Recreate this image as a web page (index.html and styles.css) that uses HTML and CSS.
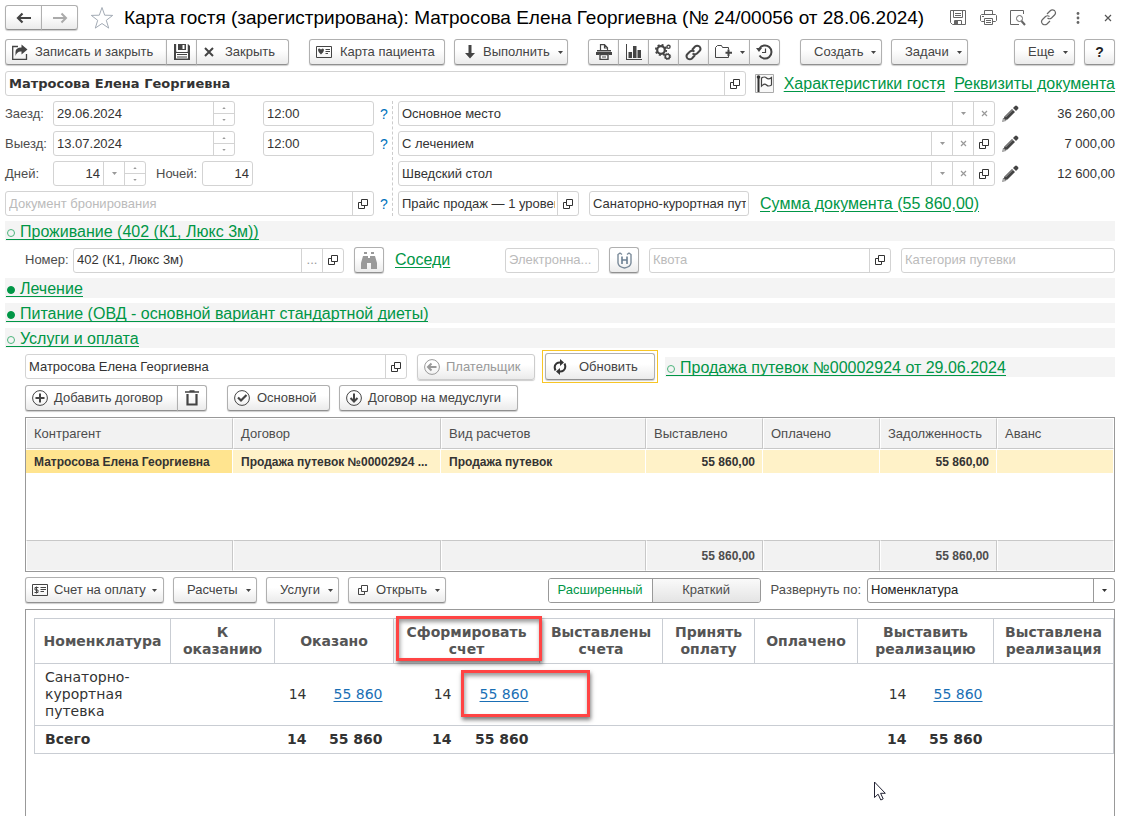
FILE: index.html
```html
<!DOCTYPE html>
<html lang="ru">
<head>
<meta charset="utf-8">
<title>Карта гостя</title>
<link rel="stylesheet" href="styles.css">
</head>
<body>
<svg class="sprite" aria-hidden="true">
  <symbol id="open" viewBox="0 0 10 10"><path d="M3.500 .5h6v6h-6zM3.500 3.500h-3v6h6v-3" fill="none" stroke="currentColor"/></symbol>
  <symbol id="down" viewBox="0 0 5 3"><path d="M0 0h5L2.500 3z" fill="currentColor"/></symbol>
  <symbol id="up" viewBox="0 0 5 3"><path d="M0 3h5L2.500 0z" fill="currentColor"/></symbol>
  <symbol id="clear" viewBox="0 0 7 7"><path d="M1 1l5 5M6 1L1 6" fill="none" stroke="currentColor" stroke-width="1.200"/></symbol>
  <symbol id="pencil" viewBox="0 0 18 18"><path d="M2 15.500l1.500-4L11 4l3 3-7.500 7.500z" fill="#444"/><path d="M12 3l2-2a1.500 1.500 0 0 1 2 0l1 1a1.500 1.500 0 0 1 0 2l-2 2z" fill="#444"/><path d="M4.500 12l7-7" stroke="#aaa" stroke-width="1"/><path d="M1.500 16.500l1-3.500L5 15.500z" fill="#ccc" stroke="#666" stroke-width=".6"/></symbol>
</svg>

<header class="titlebar">
  <div class="group nav">
    <button class="btn" aria-label="Назад"><svg width="16" height="12" viewBox="0 0 16 12"><path d="M2 6h13" stroke="#444" stroke-width="2"/><path d="M6.500 1.500L2 6l4.500 4.500" fill="none" stroke="#444" stroke-width="2.200"/></svg></button>
    <button class="btn" aria-label="Вперед"><svg width="16" height="12" viewBox="0 0 16 12"><path d="M1 6h13" stroke="#aaa" stroke-width="2"/><path d="M9.500 1.500L14 6l-4.500 4.500" fill="none" stroke="#aaa" stroke-width="2"/></svg></button>
  </div>
  <svg class="star" width="24" height="24" viewBox="0 0 24 24"><path d="M12 1.500l2.700 7.700 8 .2-6.400 4.900 2.400 7.800L12 17.500l-6.700 4.600 2.400-7.800L1.300 9.400l8-.2z" fill="#fff" stroke="#a3abb5"/></svg>
  <h1>Карта гостя (зарегистрирована): Матросова Елена Георгиевна (№ 24/00056 от 28.06.2024)</h1>
  <div class="window-tools">
    <button class="tool" aria-label="Сохранить"><svg width="16" height="16" viewBox="0 0 16 16" fill="none" stroke="#666"><path d="M1 .5h14.500v14H2.500l-2-2V.5zM3.500.5v7h9v-7M5 3.500h6M5 5.500h6M4.500 14.500v-4h7v4"/><path d="M5 11h3v3H5z" fill="#666" stroke="none"/></svg></button>
    <button class="tool" aria-label="Печать"><svg width="17" height="16" viewBox="0 0 17 16" fill="none" stroke="#666"><path d="M4.500 4.500v-4h8v4M4.500 11.500h-3l-1-1v-5l1-1h14l1 1v5l-1 1h-3M4.500 8.500h8v6h-8zM6 10.500h5M6 12.500h5M2 6.500h2"/></svg></button>
    <button class="tool" aria-label="Просмотр"><svg width="16" height="16" viewBox="0 0 16 16" fill="none" stroke="#666"><path d="M13.500 4V.5H.5v14H9"/><circle cx="9.500" cy="8.500" r="3"/><path d="M11.500 11l3.500 4" stroke-width="2"/></svg></button>
    <button class="tool" aria-label="Ссылка"><svg width="17" height="17" viewBox="0 0 17 17" fill="none" stroke="#666" stroke-width="1.200"><path d="M7 5l3-3q2-2 4.500-.5 2 2.500 0 4.500l-3 3q-2 1.500-4 0M10 12l-3 3q-2 1.500-4.500 0-2-2.500 0-4.500l3-3q2-1.500 4 0"/></svg></button>
    <button class="tool" aria-label="Меню"><svg width="4" height="12" viewBox="0 0 4 12" fill="#666"><circle cx="2" cy="1.500" r="1.400"/><circle cx="2" cy="6" r="1.400"/><circle cx="2" cy="10.500" r="1.400"/></svg></button>
    <button class="tool" aria-label="Закрыть"><svg width="8" height="8" viewBox="0 0 8 8"><path d="M1 1l6 6M7 1L1 7" stroke="#555" stroke-width="1.200"/></svg></button>
  </div>
</header>

<div class="toolbar commands">
  <div class="group">
    <button class="btn w-save"><svg width="16" height="16" viewBox="0 0 16 16"><path d="M6 2.500H.700v12.800h13.800V10" fill="none" stroke="#444" stroke-width="1.300"/><path d="M3.500 12V8q0-4.500 6-4.500V.5l6 5-6 5V7.500Q5 7 3.500 12z" fill="#444"/></svg>Записать и закрыть</button>
    <button class="btn w-icon" aria-label="Записать"><svg width="16" height="16" viewBox="0 0 16 16"><path d="M0 0h2.500v8h11V0H14l2 2v14H0z" fill="#444"/><path d="M4 0h8v6H4z" fill="#444"/><path d="M8.500 1h2v4h-2z" fill="#fff"/><path d="M2 9h12v5.500H2z" fill="#fff"/><path d="M3 10.500h10M3 13h10" stroke="#444"/><path d="M2.800 0v7.500M13 0v7.500" stroke="#fff"/></svg></button>
    <button class="btn w-close"><svg width="10" height="10" viewBox="0 0 10 10"><path d="M1 1l8 8M9 1L1 9" stroke="#444" stroke-width="2"/></svg>Закрыть</button>
  </div>
  <button class="btn w-patient push"><svg width="16" height="12" viewBox="0 0 16 12"><path d="M.5.500h15v11H.5z" fill="none" stroke="#444"/><path d="M2 4q0-2 1.500-1.500L5 3.500l1.500-1Q8 2.500 8 4q0 2-3 4.500Q2 6 2 4z" fill="#444"/><path d="M9.500 3.500H14M9.500 5.500H14M9.500 7.500H12" stroke="#444"/></svg>Карта пациента</button>
  <button class="btn w-run"><svg width="10" height="14" viewBox="0 0 10 14"><path d="M3.500 0h3v8H10l-5 5.500L0 8h3.500z" fill="#444"/></svg>Выполнить<svg class="caret"><use href="#down"/></svg></button>
  <div class="group push">
    <button class="btn w-icon" aria-label="Печать"><svg width="16" height="16" viewBox="0 0 16 16"><path d="M4.500 6V.700h4l3 3V6M8.500 1v3h3" fill="none" stroke="#444" stroke-width="1.200"/><path d="M1 6h14v1.500H1zM0 8h16v3h-3.500v-1h-9v1H0z" fill="#444"/><path d="M4 10.500h8v5H4z" fill="#fff" stroke="#444" stroke-width="1.400"/><path d="M6 13h4" stroke="#444"/></svg></button>
    <button class="btn w-icon" aria-label="Отчеты"><svg width="16" height="16" viewBox="0 0 16 16" fill="#444"><path d="M0 0h1v15h15v1H0zM2.500 8H6v6H2.500zM7 2h3.500v12H7zM11.500 6H15v8h-3.500z"/></svg></button>
    <button class="btn w-icon" aria-label="Настройки"><svg width="17" height="16" viewBox="0 0 17 16" fill="none" stroke="#444"><circle cx="6" cy="6" r="3.800" stroke-width="2.200"/><circle cx="6" cy="6" r="5.200" stroke-width="1.800" stroke-dasharray="2 2.080"/><circle cx="13.500" cy="2.800" r="1.600" stroke-width="1.400"/><circle cx="12.500" cy="12.500" r="2.200" stroke-width="1.600"/><circle cx="12.500" cy="12.500" r="3.200" stroke-dasharray="1.200 1.300"/></svg></button>
    <button class="btn w-icon" aria-label="Ссылка"><svg width="17" height="17" viewBox="0 0 17 17" fill="none" stroke="#444" stroke-width="2"><path d="M7 6l3-3.500q2-1.500 4.500 0 2 2.500 0 4.500L12 9.500q-2 1.500-4.500 0M10 11l-3 3.500q-2 1.500-4.500 0-2-2.500 0-4.500L5 7.500q2-1.500 4.500 0"/></svg></button>
    <button class="btn w-folder" aria-label="Папка"><svg width="17" height="14" viewBox="0 0 17 14"><path d="M13.500 4.500v-2h-6l-1-2h-4l-2 2v10h13v-2" fill="none" stroke="#444"/><path d="M13.500 4.500v6.500M10.500 7.700H17" stroke="#444" stroke-width="2"/></svg><svg class="caret"><use href="#down"/></svg></button>
    <button class="btn w-icon" aria-label="История"><svg width="17" height="16" viewBox="0 0 17 16" fill="none" stroke="#444"><path d="M3.500 11.500A6.500 6.500 0 1 0 3.500 4.500" stroke-width="2"/><path d="M0 4h6L3 8z" fill="#444" stroke="none"/><path d="M9.500 4.500v4H6" stroke-width="1.200"/></svg></button>
  </div>
  <button class="btn w-create push">Создать<svg class="caret"><use href="#down"/></svg></button>
  <button class="btn w-tasks">Задачи<svg class="caret"><use href="#down"/></svg></button>
  <button class="btn w-more to-end">Еще<svg class="caret"><use href="#down"/></svg></button>
  <button class="btn w-icon help">?</button>
</div>

<main>
<div class="row guest">
  <div class="field grow"><input class="strong" aria-label="Гость" value="Матросова Елена Георгиевна"><button aria-label="Открыть"><svg class="i10"><use href="#open"/></svg></button></div>
  <svg class="flag" width="19" height="19" viewBox="0 0 19 19"><path d="M.5.500h18v18H.5z" fill="#f8f8f8" stroke="#aaa"/><path d="M3.500 3v15" stroke="#333" stroke-width="2"/><circle cx="3.500" cy="3" r="1.800" fill="#333"/><path d="M6.500 4q3-2 5 0t5-.5v7.500q-3 2-5 0t-5 1z" fill="#fff" stroke="#444" stroke-width="1.200"/></svg>
  <a class="link" href="#">Характеристики гостя</a>
  <a class="link" href="#">Реквизиты документа</a>
</div>

<div class="details">
  <div class="stay">
    <div class="row"><label class="lead" for="in">Заезд:</label><div class="field date"><input id="in" value="29.06.2024"><span class="spin"><button aria-label="Больше"><svg><use href="#up"/></svg></button><button aria-label="Меньше"><svg><use href="#down"/></svg></button></span></div><div class="field time"><input aria-label="Время заезда" value="12:00"></div><a class="hint" href="#">?</a></div>
    <div class="row"><label class="lead" for="out">Выезд:</label><div class="field date"><input id="out" value="13.07.2024"><span class="spin"><button aria-label="Больше"><svg><use href="#up"/></svg></button><button aria-label="Меньше"><svg><use href="#down"/></svg></button></span></div><div class="field time"><input aria-label="Время выезда" value="12:00"></div><a class="hint" href="#">?</a></div>
    <div class="row"><label class="lead" for="days">Дней:</label><div class="field days"><input id="days" class="num" value="14"><button aria-label="Выбрать"><svg class="caret dim"><use href="#down"/></svg></button><span class="spin"><button aria-label="Больше"><svg><use href="#up"/></svg></button><button aria-label="Меньше"><svg><use href="#down"/></svg></button></span></div><label class="nights-label" for="nights">Ночей:</label><div class="field nights"><input id="nights" class="num" value="14"></div></div>
    <div class="row"><div class="field grow"><input aria-label="Документ бронирования" placeholder="Документ бронирования"><button aria-label="Открыть"><svg class="i10"><use href="#open"/></svg></button></div><a class="hint" href="#">?</a></div>
  </div>
  <div class="services">
    <div class="row"><div class="field grow"><input aria-label="Размещение" value="Основное место"><button aria-label="Выбрать"><svg class="caret dim"><use href="#down"/></svg></button><button aria-label="Очистить"><svg class="i7 dim"><use href="#clear"/></svg></button></div><button class="edit" aria-label="Изменить"><svg width="18" height="18"><use href="#pencil"/></svg></button><output>36 260,00</output></div>
    <div class="row"><div class="field grow"><input aria-label="Лечение" value="С лечением"><button aria-label="Выбрать"><svg class="caret dim"><use href="#down"/></svg></button><button aria-label="Очистить"><svg class="i7 dim"><use href="#clear"/></svg></button><button aria-label="Открыть"><svg class="i10"><use href="#open"/></svg></button></div><button class="edit" aria-label="Изменить"><svg width="18" height="18"><use href="#pencil"/></svg></button><output>7 000,00</output></div>
    <div class="row"><div class="field grow"><input aria-label="Питание" value="Шведский стол"><button aria-label="Выбрать"><svg class="caret dim"><use href="#down"/></svg></button><button aria-label="Очистить"><svg class="i7 dim"><use href="#clear"/></svg></button><button aria-label="Открыть"><svg class="i10"><use href="#open"/></svg></button></div><button class="edit" aria-label="Изменить"><svg width="18" height="18"><use href="#pencil"/></svg></button><output>12 600,00</output></div>
    <div class="row"><div class="field price"><input aria-label="Прайс" value="Прайс продаж — 1 уровень"><button aria-label="Открыть"><svg class="i10"><use href="#open"/></svg></button></div><div class="field voucher"><input aria-label="Путевка" value="Санаторно-курортная путевка"></div><a class="link" href="#">Сумма документа (55 860,00)</a></div>
  </div>
</div>

<div class="section"><a class="link" href="#"><i class="dot"></i>Проживание (402 (К1, Люкс 3м))</a></div>
<div class="row room">
  <label for="room">Номер:</label>
  <div class="field room-no"><input id="room" value="402 (К1, Люкс 3м)"><button class="dim" aria-label="Выбрать">...</button><button aria-label="Открыть"><svg class="i10"><use href="#open"/></svg></button></div>
  <button class="btn w-icon" aria-label="Поиск"><svg width="16" height="17" viewBox="0 0 16 17" fill="#999"><path d="M3 0h3v2H3zM10 0h3v2h-3zM2 4h5v2h2V4h5l2 7v6H10v-6H6v6H0v-6z"/></svg></button>
  <a class="link" href="#">Соседи</a>
  <div class="field email"><input aria-label="Электронная почта" placeholder="Электронна..."></div>
  <button class="btn w-icon" aria-label="Мед"><svg width="15" height="17" viewBox="0 0 15 17" fill="none" stroke="#7b8b9a"><path d="M5 2.500L3 1 1 2.500V11q.5 4 6.500 5Q13.500 15 14 11V2.500L12 1l-2 1.500" stroke-width="1.400"/><path d="M5 4.500v7.500M10 4.500v7.500M5 8h5" stroke="#6b7f92" stroke-width="1.600"/></svg></button>
  <div class="field quota"><input aria-label="Квота" placeholder="Квота"><button aria-label="Открыть"><svg class="i10"><use href="#open"/></svg></button></div>
  <div class="field grow"><input aria-label="Категория путевки" placeholder="Категория путевки"></div>
</div>
<div class="section"><a class="link" href="#"><i class="dot full"></i>Лечение</a></div>
<div class="section"><a class="link" href="#"><i class="dot full"></i>Питание (ОВД - основной вариант стандартной диеты)</a></div>
<div class="section"><a class="link" href="#"><i class="dot"></i>Услуги и оплата</a></div>

<div class="payment">
  <div class="row payer-row">
    <div class="field payer"><input aria-label="Плательщик" value="Матросова Елена Георгиевна"><button aria-label="Открыть"><svg class="i10"><use href="#open"/></svg></button></div>
    <button class="btn w-payer" disabled><svg width="16" height="16" viewBox="0 0 16 16" fill="none" stroke="#999"><circle cx="8" cy="8" r="7.400"/><path d="M4 8h8.500M7.500 4.500L4 8l3.500 3.500" stroke-width="2"/></svg>Плательщик</button>
    <div class="focus"><button class="btn w-refresh"><svg width="14" height="16" viewBox="0 0 14 16"><path d="M2.500 11.500Q.5 7 3.500 4.500 5 3.300 7.500 3.500M11.500 4.500q2 4.500-1 7-1.500 1.200-4 1" fill="none" stroke="#333" stroke-width="2"/><path d="M7 0l4 3.500L7 7zM7 9l-4 3.500L7 16z" fill="#333"/></svg>Обновить</button></div>
    <div class="section sale"><a class="link" href="#"><i class="dot"></i>Продажа путевок №00002924 от 29.06.2024</a></div>
  </div>
  <div class="toolbar contracts">
    <div class="group">
      <button class="btn w-add"><svg width="16" height="16" viewBox="0 0 16 16" fill="none" stroke="#444"><circle cx="8" cy="8" r="7.400"/><path d="M8 3.500v9M3.500 8h9" stroke-width="2"/></svg>Добавить договор</button>
      <button class="btn w-icon" aria-label="Удалить"><svg width="14" height="16" viewBox="0 0 14 16" fill="none" stroke="#444"><path d="M0 2h14M4.500 1h5" stroke-width="1.600"/><path d="M2.500 4v10.500h9V4" stroke-width="2.200"/></svg></button>
    </div>
    <button class="btn w-main push"><svg width="16" height="16" viewBox="0 0 16 16" fill="none" stroke="#444"><circle cx="8" cy="8" r="7.400"/><path d="M4 7.500L7 10.500 12.500 5" stroke-width="2.200"/></svg>Основной</button>
    <button class="btn w-med"><svg width="16" height="16" viewBox="0 0 16 16" fill="none" stroke="#444"><circle cx="8" cy="8" r="7.400"/><path d="M8 3.500v8M4.500 8L8 11.500 11.500 8" stroke-width="2"/></svg>Договор на медуслуги</button>
  </div>

  <table class="contracts-table">
    <colgroup><col style="width:207px"><col style="width:208px"><col style="width:205px"><col style="width:117px"><col style="width:117px"><col style="width:117px"><col></colgroup>
    <thead><tr><th>Контрагент</th><th>Договор</th><th>Вид расчетов</th><th>Выставлено</th><th>Оплачено</th><th>Задолженность</th><th>Аванс</th></tr></thead>
    <tbody>
      <tr class="selected"><td>Матросова Елена Георгиевна</td><td>Продажа путевок №00002924 ...</td><td>Продажа путевок</td><td class="sum">55 860,00</td><td></td><td class="sum">55 860,00</td><td></td></tr>
      <tr class="blank"><td colspan="7"></td></tr>
    </tbody>
    <tfoot><tr><td></td><td></td><td></td><td class="sum">55 860,00</td><td></td><td class="sum">55 860,00</td><td></td></tr></tfoot>
  </table>

  <div class="toolbar report-bar">
    <button class="btn w-bill"><svg width="16" height="12" viewBox="0 0 16 12" fill="none" stroke="#444"><path d="M.5.500h15v11H.5zM8.500 3.500H14M8.500 5.500H14M8.500 7.500H12"/><path d="M6.500 3.500H3V6h3v2.500H2.500M4.500 2.500v7"/></svg>Счет на оплату<svg class="caret"><use href="#down"/></svg></button>
    <button class="btn w-calc">Расчеты<svg class="caret"><use href="#down"/></svg></button>
    <button class="btn w-serv">Услуги<svg class="caret"><use href="#down"/></svg></button>
    <button class="btn w-open"><svg class="i10"><use href="#open"/></svg>Открыть<svg class="caret"><use href="#down"/></svg></button>
    <div class="toggle to-end"><button class="active">Расширенный</button><button>Краткий</button></div>
    <label for="by">Развернуть по:</label>
    <div class="select"><select id="by"><option>Номенклатура</option></select><span><svg class="caret"><use href="#down"/></svg></span></div>
  </div>

  <div class="report">
    <table>
      <colgroup><col style="width:136px"><col style="width:104px"><col style="width:43px"><col style="width:76px"><col style="width:69px"><col style="width:77px"><col style="width:123px"><col style="width:92px"><col style="width:103px"><col style="width:60px"><col style="width:76px"><col style="width:120px"></colgroup>
      <thead><tr><th>Номенклатура</th><th>К оказанию</th><th colspan="2">Оказано</th><th colspan="2" class="marked">Сформировать счет<span class="mark mark-head"></span></th><th>Выставлены счета</th><th>Принять оплату</th><th>Оплачено</th><th colspan="2">Выставить реализацию</th><th>Выставлена реализация</th></tr></thead>
      <tbody><tr><td>Санаторно-курортная путевка</td><td></td><td class="sum">14</td><td class="sum"><a href="#">55 860</a></td><td class="sum">14</td><td class="sum marked"><a href="#">55 860</a><span class="mark mark-cell"></span></td><td></td><td></td><td></td><td class="sum">14</td><td class="sum"><a href="#">55 860</a></td><td></td></tr></tbody>
      <tfoot><tr><td>Всего</td><td></td><td class="sum">14</td><td class="sum">55 860</td><td class="sum">14</td><td class="sum">55 860</td><td></td><td></td><td></td><td class="sum">14</td><td class="sum">55 860</td><td></td></tr></tfoot>
    </table>
  </div>
</div>
</main>
<svg class="pointer" width="13" height="20" viewBox="0 0 13 20"><path d="M1.500 1v15.500l3.600-3.300 2.700 5.800 2.400-1.100-2.600-5.600h4.700z" fill="#fff" stroke="#223"/></svg>
</body>
</html>
```
FILE: styles.css
```css
* { box-sizing: border-box; }
html { background: #fff; }
body {
  margin: 0;
  padding: 5px 12px 0 5px;
  min-height: 100vh;
  display: flex;
  flex-direction: column;
  position: relative;
  font: 13px/16px "Liberation Sans", Arial, sans-serif;
  color: #333;
}
button, input, select { font: inherit; color: inherit; }
button { padding: 0; margin: 0; border: 0; background: none; }
svg { flex: none; display: block; }
.sprite { position: absolute; width: 0; height: 0; }
.i10 { width: 10px; height: 10px; }
.i7 { width: 7px; height: 7px; }
.caret { width: 5px; height: 3px; }
.dim { color: #999; }
.grow { flex: 1; min-width: 0; }

/* Title bar */
.titlebar { display: flex; align-items: center; height: 25px; }
.titlebar h1 { margin: 0 0 0 10px; font-size: 19px; line-height: 24px; font-weight: normal; color: #000; white-space: nowrap; }
.nav .btn { width: 37px; height: 25px; }
.star { margin-left: 12px; }
.window-tools { margin-left: auto; margin-right: -8px; display: flex; }
.tool { width: 30px; height: 24px; display: flex; align-items: center; justify-content: center; }

/* Buttons */
.btn {
  display: flex;
  align-items: center;
  gap: 8px;
  height: 26px;
  padding: 0 6px;
  border: 1px solid #b0b0b0;
  border-bottom-color: #909090;
  border-radius: 3px;
  background: linear-gradient(#fff 40%, #ebebeb);
  box-shadow: 0 1px 1px #ccc;
  color: #444;
  white-space: nowrap;
}
.btn:disabled { color: #999; border-color: #ccc; }
.btn .caret { margin-left: auto; }
.group { display: flex; }
.group .btn + .btn { margin-left: -1px; border-top-left-radius: 0; border-bottom-left-radius: 0; }
.group .btn:not(:last-child) { border-top-right-radius: 0; border-bottom-right-radius: 0; }
.nav .btn, .w-icon { justify-content: center; padding: 0; }
.w-icon { width: 30px; }
.commands .w-icon { width: 31px; }
.toolbar { display: flex; align-items: center; gap: 9px; }
.commands { margin-top: 9px; }
.push { margin-left: 11px; }
.to-end { margin-left: auto; }
.w-save { width: 162px; gap: 7px; }
.w-close { width: 93px; gap: 11px; padding-left: 7px; }
.w-patient { width: 136px; }
.w-run { width: 114px; padding-left: 10px; }
.w-folder { width: 42px; }
.w-create { width: 82px; padding-left: 13px; }
.w-tasks { width: 77px; padding-left: 13px; }
.w-more { width: 61px; padding-left: 13px; }
.help { font-weight: bold; font-size: 14px; color: #222; }

/* Fields */
.row { display: flex; align-items: center; height: 25px; }
.field { display: flex; height: 25px; border: 1px solid #d3d3d3; border-radius: 3px; background: #fff; }
.field input { flex: 1; min-width: 0; width: 0; border: 0; padding: 0 2px 0 3px; background: none; outline: 0; }
.field input::placeholder { color: #bbb; opacity: 1; }
.field input.strong { font-family: "DejaVu Sans", Verdana, sans-serif; font-weight: bold; }
.field input.num { text-align: right; padding-right: 3px; }
.field > button { width: 21px; border-left: 1px solid #d3d3d3; display: flex; align-items: center; justify-content: center; }
.spin { width: 21px; border-left: 1px solid #d3d3d3; display: flex; flex-direction: column; color: #999; }
.spin button { flex: 1; display: flex; align-items: center; justify-content: center; }
.spin button + button { border-top: 1px solid #d3d3d3; }
.spin svg { width: 4px; height: 2px; }
label { color: #4d4d4d; white-space: nowrap; }
.link { color: #009646; font-size: 16px; line-height: 18px; white-space: nowrap; text-underline-offset: 2px; }

.guest { margin-top: 6px; }
.flag { margin: 0 10px 0 9px; }
.guest .link + .link { margin-left: 9px; }
.details { display: flex; margin-top: 5px; }
.stay, .services { display: flex; flex-direction: column; gap: 5px; }
.stay { width: 388px; padding-right: 5px; border-right: 1px dashed #ccc; }
.services { flex: 1; min-width: 0; padding-left: 5px; }
.lead { width: 48px; }
.date { width: 182px; }
.time { width: 111px; margin-left: 28px; }
.days { width: 93px; }
.nights-label { width: 56px; padding-left: 10px; }
.nights { width: 51px; }
.hint { width: 8px; margin-left: 6px; margin-right: -1px; color: #0072bc; font-size: 14px; text-decoration: none; }
.edit { margin-left: 6px; }
.services output { width: 96px; text-align: right; }
.price { width: 181px; }
.voucher { width: 160px; margin: 0 11px 0 10px; }

/* Sections */
.section { height: 20px; margin-top: 5px; padding-left: 1px; background: #f4f4f4; line-height: 20px; }
.section .link { display: inline-block; line-height: 17px; margin-top: 2px; border-bottom: 1px solid #009646; height: 17px; text-decoration: none; }
.dot { display: inline-block; width: 8px; height: 8px; margin: 0 5px 0 1px; border: 1px solid #4db57d; border-radius: 50%; }
.dot.full { background: #009646; border-color: #009646; }
.room { height: 26px; margin-top: 6px; padding-left: 20px; }
.room label { width: 48px; }
.room-no { width: 271px; margin-right: 10px; }
.room .link { margin: 0 auto 0 11px; }
.email { width: 94px; margin-right: 10px; }
.quota { width: 242px; margin: 0 10px; }
.room .grow { flex: 0 0 214px; }

/* Payment */
main { flex: 1; display: flex; flex-direction: column; }
.payment { flex: 1; display: flex; flex-direction: column; padding-left: 20px; }
.payer-row { height: 33px; margin-top: 2px; }
.payer { width: 382px; }
.w-payer { width: 118px; margin: 0 7px 0 10px; gap: 6px; }
.focus { padding: 2px; border: 1px solid #f7c526; }
.w-refresh { width: 110px; height: 27px; gap: 12px; padding-left: 7px; }
.sale { flex: 1; margin: 0 0 0 7px; }
.contracts { margin-top: 2px; }
.w-add { width: 153px; gap: 6px; }
.w-main { width: 103px; gap: 7px; }
.w-med { width: 179px; gap: 6px; }

.contracts-table { width: 100%; margin-top: 6px; table-layout: fixed; border-collapse: separate; border-spacing: 0; border: 1px solid #999; }
.contracts-table th, .contracts-table td { padding: 0 7px; overflow: hidden; white-space: nowrap; border: 1px solid #fff; text-align: left; }
.contracts-table th { height: 31px; background: #f2f2f2; color: #4d4d4d; font-weight: normal; border-right-color: #c8c8c8; border-bottom-color: #c8c8c8; }
.contracts-table th:last-child, .contracts-table tfoot td:last-child { border-right-color: #fff; }
.contracts-table .selected td { height: 25px; background: #fff2c8; font-size: 12px; font-weight: bold; border-left: 0; padding-left: 8px; }
.contracts-table .selected td:first-child { background: #ffe48f; }
.contracts-table .blank td { height: 66px; }
.contracts-table tfoot td { height: 31px; background: #f2f2f2; color: #4d4d4d; font-size: 12px; font-weight: bold; border-right-color: #c8c8c8; border-top-color: #c8c8c8; }
.contracts-table .sum, .report .sum { text-align: right; }

.report-bar { margin-top: 5px; }
.w-bill { width: 139px; gap: 6px; }
.w-calc { width: 84px; padding-left: 13px; }
.w-serv { width: 73px; padding-left: 13px; }
.w-open { width: 98px; padding: 0 6px 0 9px; }
.toggle { display: flex; height: 25px; border: 1px solid #999; border-radius: 3px; overflow: hidden; }
.toggle button { width: 108px; background: linear-gradient(#fafafa, #e4e4e4); color: #4d4d4d; border-left: 1px solid #999; }
.toggle .active { width: 103px; background: #fff; color: #009646; border: 0; }
.report-bar label { margin-left: 1px; margin-right: -3px; }
.select { display: flex; position: relative; width: 248px; height: 25px; border: 1px solid #999; border-radius: 3px; }
.select select { flex: 1; appearance: none; border: 0; background: none; padding: 0 3px; color: #222; }
.select span { position: absolute; right: 0; top: 0; bottom: 0; width: 21px; border-left: 1px solid #999; display: flex; align-items: center; justify-content: center; pointer-events: none; }

.report { flex: 1; margin-top: 6px; padding: 8px 0 0 8px; border: 1px solid #999; border-bottom: 0; font: 14px/17px "DejaVu Sans", Verdana, sans-serif; }
.report table { width: 100%; table-layout: fixed; border-collapse: collapse; border: 1px solid #c9cdd3; }
.report th { height: 45px; padding: 0 8px; border: 1px solid #c9cdd3; color: #555; }
.report td { padding: 5px 10px; height: 28px; }
.report .sum { padding: 5px 11px 5px 0; }
.report tbody td { height: 62px; }
.report tfoot { border-top: 1px solid #c9cdd3; font-weight: bold; }
.report a { color: #1a6fb5; text-underline-offset: 2px; }
.marked { position: relative; }
.mark { position: absolute; border: 3px solid #ff4444; box-shadow: 1px 3px 4px rgba(0,0,0,.5), inset 1px 3px 4px rgba(0,0,0,.4); pointer-events: none; }
.mark-head { inset: -3px -3px 2px 2px; }
.mark-cell { inset: 6px -50px 8px -2px; z-index: 1; }
.pointer { position: absolute; left: 873px; top: 781px; }
```
